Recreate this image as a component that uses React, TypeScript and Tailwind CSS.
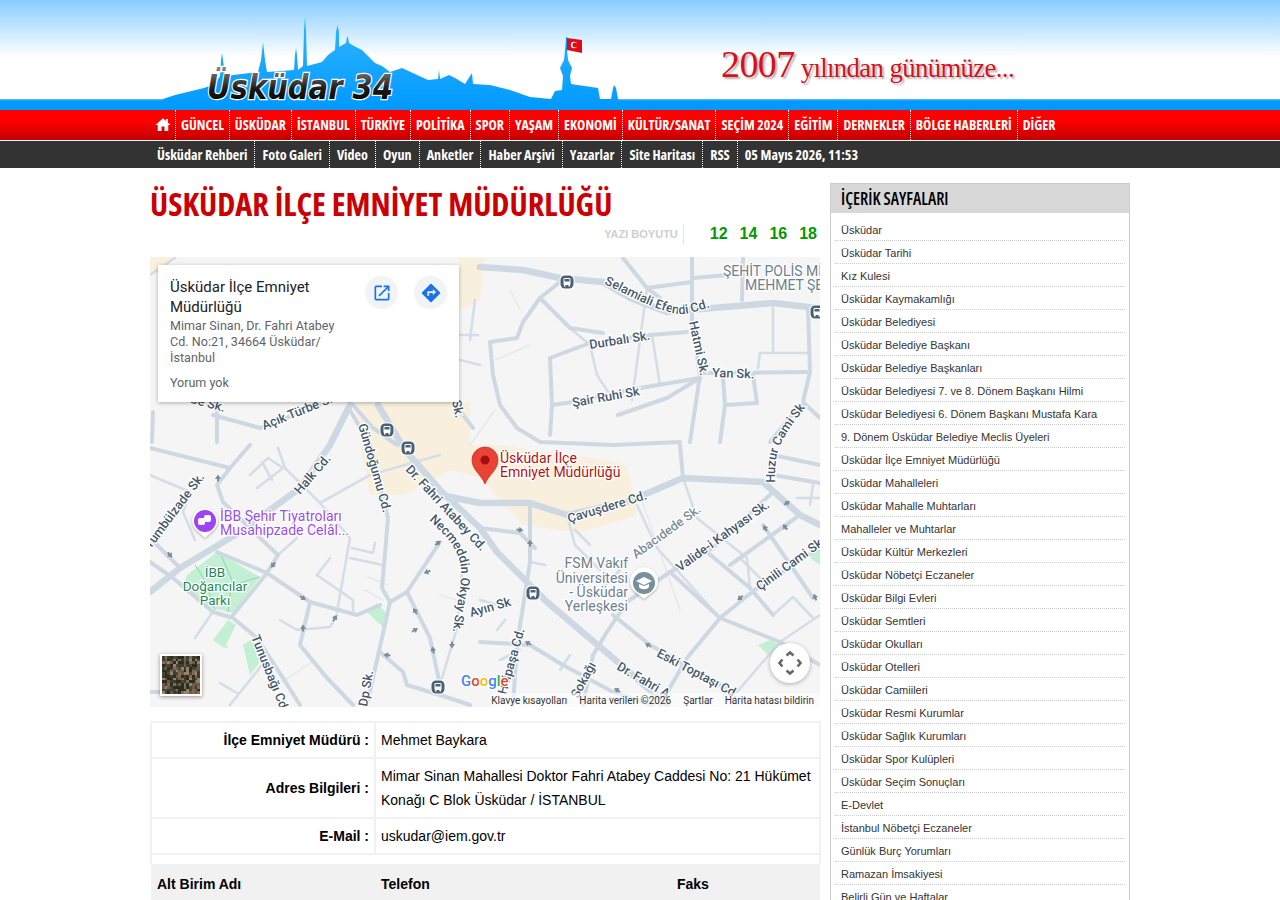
import React from 'react';

const MAIN_MENU = ['GÜNCEL', 'ÜSKÜDAR', 'İSTANBUL', 'TÜRKİYE', 'POLİTİKA', 'SPOR', 'YAŞAM', 'EKONOMİ', 'KÜLTÜR/SANAT', 'SEÇİM 2024', 'EĞİTİM', 'DERNEKLER', 'BÖLGE HABERLERİ', 'DİĞER'];
const SUB_MENU = ['Üsküdar Rehberi', 'Foto Galeri', 'Video', 'Oyun', 'Anketler', 'Haber Arşivi', 'Yazarlar', 'Site Haritası', 'RSS', '05 Mayıs 2026, 11:53'];
const PAGES = [
  'Üsküdar', 'Üsküdar Tarihi', 'Kız Kulesi', 'Üsküdar Kaymakamlığı', 'Üsküdar Belediyesi', 'Üsküdar Belediye Başkanı',
  'Üsküdar Belediye Başkanları', 'Üsküdar Belediyesi 7. ve 8. Dönem Başkanı Hilmi', 'Üsküdar Belediyesi 6. Dönem Başkanı Mustafa Kara',
  '9. Dönem Üsküdar Belediye Meclis Üyeleri', 'Üsküdar İlçe Emniyet Müdürlüğü', 'Üsküdar Mahalleleri', 'Üsküdar Mahalle Muhtarları',
  'Mahalleler ve Muhtarlar', 'Üsküdar Kültür Merkezleri', 'Üsküdar Nöbetçi Eczaneler', 'Üsküdar Bilgi Evleri', 'Üsküdar Semtleri',
  'Üsküdar Okulları', 'Üsküdar Otelleri', 'Üsküdar Camiileri', 'Üsküdar Resmi Kurumlar', 'Üsküdar Sağlık Kurumları', 'Üsküdar Spor Kulüpleri',
  'Üsküdar Seçim Sonuçları', 'E-Devlet', 'İstanbul Nöbetçi Eczaneler', 'Günlük Burç Yorumları', 'Ramazan İmsakiyesi', 'Belirli Gün ve Haftalar',
];

// map is drawn in page coordinates, viewBox starts at the map's corner
const ROADS_WIDE = [
  '480,267 523,270 560,278 603,282 630,298 667,312 713,308 773,303 817,308',
  '330,445 300,488 240,532 180,568 150,592',
  '350,405 330,445',
  '378,405 405,450 440,490 480,528 497,552 547,602 613,658 667,705',
  '440,495 480,503 530,503 567,515 627,502 683,478 763,482 800,515 820,525',
];
const ROADS_MID = [
  '560,282 540,298 523,322 517,338 490,342 493,375 500,405 517,428 540,442 613,445 680,442',
  '550,358 590,343 650,335 687,332', '540,298 570,328 603,333', '550,358 552,405 550,435',
  '552,405 573,402 640,388 700,378', '618,415 667,398 700,378', '692,258 692,322 700,375 690,442',
  '693,278 727,275', '743,258 742,300', '647,288 692,282', '623,258 647,288 660,298', '700,373 810,372',
  '808,308 810,372 803,402 820,418', '723,378 725,405 720,442', '725,405 757,403 753,375', '803,402 770,442',
  '150,562 173,578 213,612 233,618 257,638 283,678 300,705', '217,552 267,573 310,602 357,615 380,605',
  '267,573 278,555 257,535 223,502 217,485 230,468 250,445', '150,448 230,468', '267,573 233,615',
  '310,602 300,645 327,678 353,705', '350,410 370,445 388,518 382,588 390,602 367,705', '390,602 407,592 440,542',
  '407,592 430,638 440,685', '380,652 403,672 407,685 440,695 470,705', '153,412 152,442', '217,408 217,442', '213,415 260,428 320,405',
  '353,405 373,428 397,445', '150,538 180,568', '627,602 670,572 713,548 773,492', '670,572 720,618 780,642 820,665', '720,618 687,658 660,705',
  '720,618 757,588 820,548', '730,565 797,517', '683,478 680,445', '613,615 650,645 733,692', '530,505 530,562 517,645 513,705',
  '480,642 530,645 563,665 613,692 653,705', '593,655 583,705', '627,602 607,632 593,655', '707,552 750,588 773,615', '763,525 813,598', '773,492 800,515',
  '773,455 820,465', '773,475 820,483', '480,528 520,533 535,548', '150,692 165,692', '453,402 473,428',
];
const ROADS_THIN = [
  '773,308 773,352', '760,353 810,353', '760,353 758,368', '570,328 590,345 597,375 610,395', '647,288 640,340 632,400', '652,335 660,385',
  '433,518 463,558 457,628 442,678', '278,448 285,468 320,503 370,475 440,455', '320,503 350,538 337,612', '352,548 373,553 375,543', '350,558 383,565',
  '250,475 268,458 283,468 257,488', '262,462 272,480', '317,575 330,558', '317,575 353,600 353,612', '280,620 297,630 330,627 337,615',
  '195,638 212,613', '220,683 237,693', '230,705 262,665', '150,475 190,492 183,512 195,540', '278,555 297,538', '637,505 657,548 720,618',
  '683,478 697,518 747,558 750,588', '740,558 760,578', '773,615 793,597 813,618', '820,615 780,642', '737,692 780,642', '797,498 820,498', '813,485 810,505',
  '567,515 575,545 600,570', '460,335 478,335', '460,360 480,365', '475,300 470,340', '530,562 545,565', '480,600 505,607', '505,620 497,630',
  '500,660 520,650', '560,670 570,655', '150,275 175,258', '575,530 590,545', '600,590 620,570',
];
const ROADS_FAINT = ['470,445 495,410', '510,290 520,310', '530,345 495,360', '270,690 315,660', '368,577 388,585', '365,590 382,600', '440,595 462,602', '640,495 680,610'];

const PARKS = [
  '187,575 217,552 260,577 233,613 212,608 183,588', '213,640 228,620 236,625 226,645 228,648 222,647',
  '243,645 253,638 260,662 250,675', '367,612 377,603 388,615 383,627', '758,645 770,640 780,645 770,657', '810,558 820,548 820,565',
];
const BEIGE = [
  '355,402 470,402 470,445 500,445 530,450 593,458 627,465 637,515 580,533 523,525 480,478 450,470 405,495 370,495 365,470 357,420',
  '150,257 175,257 160,272 150,272', '458,258 485,258 480,300 460,310',
];
const ARROWS: [number, number, number][] = [
  [170, 555, 140], [218, 478, 0], [273, 565, 220], [303, 598, 120], [335, 618, 30], [303, 628, 0], [387, 655, 280], [415, 611, 330], [415, 630, 60],
  [433, 650, 345], [452, 645, 180], [427, 572, 250], [438, 543, 55], [520, 530, 100], [530, 543, 0], [648, 645, 300], [740, 598, 230], [765, 528, 330],
  [787, 503, 60], [785, 527, 320], [815, 597, 340], [528, 643, 300], [617, 690, 300],
];
const BUS_STOPS: [number, number][] = [[567, 282], [817, 312], [387, 430], [408, 448], [438, 687], [533, 593]];

type Label = { t: string; x: number; y: number; r: number; light?: boolean; anchor?: 'start' | 'end' };
const LABELS: Label[] = [
  { t: 'Hatmi Sk.', x: 689, y: 322, r: 78 },
  { t: 'Durbalı Sk.', x: 590, y: 349, r: -9 },
  { t: 'Şair Ruhi Sk', x: 573, y: 407, r: -10 },
  { t: 'Yan Sk.', x: 712, y: 377, r: 2 },
  { t: 'Açık Türbe Sk.', x: 264, y: 430, r: -22 },
  { t: 'Türbe Sk.', x: 172, y: 398, r: 15 },
  { t: 'Sk.', x: 452, y: 401, r: 78 },
  { t: 'Gündoğumu Cd.', x: 358, y: 425, r: 74 },
  { t: 'Halk Cd.', x: 300, y: 495, r: -49 },
  { t: 'Tumbülzade Sk.', x: 205, y: 477, r: -53, anchor: 'end' },
  { t: 'Dr. Fahri Atabey Cd.', x: 405, y: 470, r: 47 },
  { t: 'Ayın Sk', x: 471, y: 617, r: -16 },
  { t: 'Çavuşdere Cd.', x: 569, y: 523, r: -17 },
  { t: 'Abacıdede Sk.', x: 636, y: 559, r: -36, light: true },
  { t: 'Valide-i Kahyası Sk.', x: 680, y: 572, r: -36 },
  { t: 'Çinili Cami Sk', x: 760, y: 591, r: -36 },
  { t: 'Eski Toptaşı Cd.', x: 656, y: 656, r: 28 },
  { t: 'Dr. Fahri A', x: 616, y: 669, r: 30 },
  { t: 'Sokağı', x: 578, y: 699, r: -62 },
  { t: 'Hilipaşa Cd.', x: 506, y: 695, r: -74 },
  { t: 'Tunusbağı Cd.', x: 251, y: 637, r: 68 },
  { t: 'Dp Sk.', x: 367, y: 707, r: -80 },
];

const poly = (points: string[], width: number, color: string) =>
  points.map((p) => <polyline key={p} points={p} fill="none" stroke={color} strokeWidth={width} strokeLinejoin="round" strokeLinecap="round" />);

function BusStop({ x, y }: { x: number; y: number }) {
  return (
    <g transform={`translate(${x} ${y})`}>
      <rect x="-7.5" y="-7.5" width="15" height="15" rx="5" fill="#fff" />
      <rect x="-6.5" y="-6.5" width="13" height="13" rx="4.5" fill="#4a6076" />
      <rect x="-3.5" y="-4" width="7" height="7" rx="1" fill="#fff" />
      <rect x="-2.5" y="-3" width="5" height="2.5" fill="#4a6076" />
      <rect x="-3" y="3" width="1.5" height="1.5" fill="#fff" />
      <rect x="1.5" y="3" width="1.5" height="1.5" fill="#fff" />
    </g>
  );
}

function MapDrawing() {
  return (
    <svg viewBox="150 257 670 450" className="block w-[670px] h-[450px] font-['Roboto',sans-serif]">
      <rect x="150" y="257" width="670" height="450" fill="#f5f5f5" />
      {BEIGE.map((p) => <polygon key={p} points={p} fill="#f8f0dd" />)}
      {PARKS.map((p) => <polygon key={p} points={p} fill="#c3f0d5" />)}
      <g fill="none" stroke="#8fd3ae" strokeWidth="1">
        <polyline points="195,565 205,580 215,610" />
        <polyline points="220,553 232,580 228,612" />
        <polyline points="200,590 240,583 260,577" />
      </g>
      {poly(ROADS_FAINT, 1.5, '#e6e8ea')}
      {poly(ROADS_THIN, 2.6, '#d5dee6')}
      {poly(ROADS_MID, 4, '#cdd8e2')}
      {poly(ROADS_WIDE, 6.5, '#cdd8e2')}
      {ARROWS.map(([x, y, r]) => (
        <path key={`${x}-${y}`} d="M-3 1 0-3.5 3 1H1V3.5H-1V1Z" fill="#7c8b99" transform={`translate(${x} ${y}) rotate(${r})`} />
      ))}
      <g fontSize="12.7" fontWeight="500" stroke="#fff" strokeWidth="2.5" style={{ paintOrder: 'stroke' }}>
        {LABELS.map((l) => (
          <text key={l.t} x={l.x} y={l.y} fill={l.light ? '#7b8b9b' : '#44586c'} textAnchor={l.anchor ?? 'start'} transform={`rotate(${l.r} ${l.x} ${l.y})`}>{l.t}</text>
        ))}
        <path id="selamiali" d="M604 284 C625 293 640 303 665 311 S695 309 718 306" fill="none" stroke="none" />
        <path id="necmeddin" d="M429 520 C445 535 462 550 461 575 S455 610 453 632" fill="none" stroke="none" />
        <path id="huzur" d="M775 483 C775 455 775 445 806 407" fill="none" stroke="none" />
        <text fill="#44586c"><textPath href="#selamiali">Selamiali Efendi Cd.</textPath></text>
        <text fill="#44586c"><textPath href="#necmeddin">Necmeddin Okyay Sk.</textPath></text>
        <text fill="#44586c"><textPath href="#huzur">Huzur Cami Sk.</textPath></text>
      </g>
      <g fontSize="14" stroke="#fff" strokeWidth="2.5" style={{ paintOrder: 'stroke' }}>
        <g fill="#6d7f90">
          <text x="723" y="276">ŞEHİT POLİS Mİ</text>
          <text x="745" y="290">MEHMET ŞE</text>
          <text x="628" y="568" textAnchor="end">FSM Vakıf</text>
          <text x="628" y="583" textAnchor="end">Üniversitesi</text>
          <text x="628" y="597" textAnchor="end">- Üsküdar</text>
          <text x="628" y="611" textAnchor="end">Yerleşkesi</text>
        </g>
        <g fill="#9a4fe6">
          <text x="220" y="521">İBB Şehir Tiyatroları</text>
          <text x="220" y="535">Musahipzade Celâl...</text>
        </g>
        <g fill="#1b8a5a" textAnchor="middle" fontSize="13.5">
          <text x="215" y="577">İBB</text>
          <text x="215" y="591">Doğancılar</text>
          <text x="215" y="605">Parkı</text>
        </g>
        <g fill="#b31412">
          <text x="500" y="463">Üsküdar İlçe</text>
          <text x="500" y="477">Emniyet Müdürlüğü</text>
        </g>
      </g>
      {BUS_STOPS.map(([x, y]) => <BusStop key={`${x}-${y}`} x={x} y={y} />)}
      {/* poi pins */}
      <path d="M205 538 L195 529 A13 13 0 1 1 215 529 Z" fill="#fff" className="drop-shadow-[0_1px_1px_rgba(0,0,0,0.3)]" />
      <circle cx="205" cy="521" r="11" fill="#a142f4" />
      <rect x="198" y="518" width="7" height="7" rx="2" fill="#fff" />
      <rect x="204" y="515" width="7" height="7" rx="2" fill="#fff" />
      <path d="M644 599 L634 591 A14 14 0 1 1 654 591 Z" fill="#fff" className="drop-shadow-[0_1px_1px_rgba(0,0,0,0.3)]" />
      <circle cx="644" cy="583" r="11" fill="#78909c" />
      <path d="M644 577 652 581 644 585 636 581Z M639 584V587C641 590 647 590 649 587V584L644 586Z" fill="#fff" />
      <path d="M485 484 C481 474 472 470 472 460 A13 13 0 1 1 498 460 C498 470 489 474 485 484Z" fill="#ea4335" stroke="#c5221f" strokeWidth="0.7" />
      <circle cx="485" cy="460" r="4.5" fill="#a50e0e" />
      {/* google mark */}
      <text x="461" y="686" fontSize="15" fontWeight="500" stroke="#fff" strokeWidth="2.5" style={{ paintOrder: 'stroke' }}>
        <tspan fill="#4285f4">G</tspan><tspan fill="#ea4335">o</tspan><tspan fill="#fbbc04">o</tspan><tspan fill="#4285f4">g</tspan><tspan fill="#34a853">l</tspan><tspan fill="#ea4335">e</tspan>
      </text>
    </svg>
  );
}

function MapCard() {
  return (
    <div className="absolute left-[8px] top-[8px] w-[301px] h-[137px] bg-white shadow-[0_1px_4px_rgba(0,0,0,0.3)] pl-[12px] pr-[12px] pt-[12px] flex font-['Roboto',sans-serif]">
      <div className="w-[175px]">
        <div className="text-[15px] leading-[20px] text-[#202124]">Üsküdar İlçe Emniyet Müdürlüğü</div>
        <div className="mt-[1px] text-[12.5px] leading-[16px] tracking-[0.05px] text-[#5f6368]">Mimar Sinan, Dr. Fahri Atabey Cd. No:21, 34664 Üsküdar/ İstanbul</div>
        <div className="mt-[9px] text-[12.5px] leading-[16px] text-[#5f6368]">Yorum yok</div>
      </div>
      <div className="ml-[20px] -mt-px flex gap-[16px]">
        <div className="w-[33px] h-[33px] rounded-full bg-[#f1f3f4] flex items-center justify-center">
          <svg viewBox="0 0 24 24" className="w-[20px] h-[20px]" fill="#1a73e8"><path d="M19 19H5V5h7V3H5a2 2 0 0 0-2 2v14a2 2 0 0 0 2 2h14c1.1 0 2-.9 2-2v-7h-2v7zM14 3v2h3.59l-9.83 9.83 1.41 1.41L19 6.41V10h2V3h-7z" /></svg>
        </div>
        <div className="w-[33px] h-[33px] rounded-full bg-[#f1f3f4] flex items-center justify-center">
          <svg viewBox="0 0 24 24" className="w-[22px] h-[22px]" fill="#1a73e8"><path d="M21.71 11.29l-9-9a1 1 0 0 0-1.42 0l-9 9a1 1 0 0 0 0 1.42l9 9a1 1 0 0 0 1.42 0l9-9a1 1 0 0 0 0-1.42zM14 14.5V12h-4v3H8v-4a1 1 0 0 1 1-1h5V7.5l3.5 3.5-3.5 3.5z" /></svg>
        </div>
      </div>
    </div>
  );
}

function SatelliteThumb() {
  const cells = Array.from({ length: 196 }, (_, i) => i);
  const tones = ['#3a3f2c', '#6b5a48', '#26301f', '#85684f', '#46483a', '#9a8068', '#2c2a22'];
  return (
    <div className="absolute left-[10px] bottom-[11px] w-[42px] h-[42px] border-2 border-white shadow-[0_1px_4px_rgba(0,0,0,0.4)] overflow-hidden">
      <svg viewBox="0 0 14 14" className="block w-full h-full blur-[0.6px]" shapeRendering="crispEdges">
        {cells.map((i) => <rect key={i} x={i % 14} y={Math.floor(i / 14)} width="1" height="1" fill={tones[((i * 7919) ^ (i * i * 31)) % tones.length]} />)}
      </svg>
    </div>
  );
}

function GoogleMap() {
  return (
    <div className="relative w-[670px] h-[450px] overflow-hidden">
      <MapDrawing />
      <MapCard />
      <SatelliteThumb />
      <div className="absolute right-[10px] top-[386px] w-[40px] h-[40px] rounded-full bg-white shadow-[0_1px_4px_rgba(0,0,0,0.3)] flex items-center justify-center">
        <svg viewBox="0 0 24 24" className="w-[28px] h-[28px]" fill="none" stroke="#666" strokeWidth="2.2">
          <path d="M9 5.5 12 3l3 2.5M9 18.5l3 2.5 3-2.5M5.5 9 3 12l2.5 3M18.5 9 21 12l-2.5 3" />
        </svg>
      </div>
      <div className="absolute right-0 bottom-0 h-[14px] flex items-center pr-[6px] text-[10px] text-[#333] bg-white/60 font-['Roboto',sans-serif] whitespace-nowrap">
        <span>Klavye kısayolları</span>
        <span className="ml-[12px]">Harita verileri ©2026</span>
        <span className="ml-[12px]">Şartlar</span>
        <span className="ml-[12px]">Harita hatası bildirin</span>
      </div>
    </div>
  );
}

function Skyline() {
  return (
    <svg viewBox="0 0 480 110" className="block w-[480px] h-[110px] shrink-0">
      <defs>
        <linearGradient id="sky" x1="0" y1="0" x2="0" y2="1">
          <stop offset="0" stopColor="#33b6ff" />
          <stop offset="1" stopColor="#0099ff" />
        </linearGradient>
        <linearGradient id="logo" x1="0" y1="0" x2="0" y2="1">
          <stop offset="0" stopColor="#8a8a8a" />
          <stop offset="0.55" stopColor="#1a1a1a" />
          <stop offset="1" stopColor="#000" />
        </linearGradient>
      </defs>
      <path
        fill="url(#sky)"
        d="M13 99 25 95 54 88 65 84 70 76 71 60 72 53 73 60 75 76 108 72 111 60 113 42 115 60 117 72 144 70 145 55 146 48 147 55 148 70 153 66 154 30 155 17 156 30 157 66 172 62 178 55 185 50 186 32 187.500 25 189 32 189 47 196 43 197 37 198 37 199 43 204 46 212 50 218 56 225 63 232 66 240 72 252 68 265 74 278 80 288 79 289 70 290 79 299 75 305 78 315 84 322 73 323 84 340 85 360 90 380 97 401 99 405 91 412 90 413 76 410 68 414 60 415 50 416 40 417 50 418 60 422 68 420 76 421 84 448 88 450 99 461 99 463 88 464 85 466 88 468 99 480 110 13 110Z"
      />
      <rect x="416" y="37" width="1" height="15" fill="#0099ff" />
      <path d="M417 38 432 40 432 53 417 50Z" fill="#e30a17" />
      <circle cx="424" cy="45" r="3.200" fill="#fff" />
      <circle cx="425" cy="45" r="2.500" fill="#e30a17" />
      <text x="57" y="99" fontFamily="'DejaVu Sans',sans-serif" fontStyle="italic" fontWeight="bold" fontSize="33" fill="url(#logo)" stroke="#fff" strokeWidth="2.500" textLength="186" lengthAdjust="spacingAndGlyphs" style={{ paintOrder: 'stroke' }}>
        Üsküdar 34
      </text>
    </svg>
  );
}

export default function App() {
  return (
    <div className="min-h-screen bg-white font-['Liberation_Sans',Arial,sans-serif]">
      <header className="h-[110px] bg-[linear-gradient(#87cdfe_0,#fff_57px,#fff_99px,#66c2ff_99px,#0099ff_101px)]">
        <div className="w-[980px] mx-auto h-full flex">
          <Skyline />
          <div className="ml-[91px] pt-[40px] text-[#d8101c] font-['Liberation_Serif',serif] text-[26.7px] leading-[48px] tracking-[-0.6px] whitespace-nowrap [text-shadow:2px_2px_2px_rgba(0,0,0,0.3)]">
            <span className="text-[38px]">2007</span> yılından günümüze...
          </div>
        </div>
      </header>

      <nav className="h-[30px] bg-[linear-gradient(#ff0000_0,#ff0000_35%,#c40000_100%)] border-b-0">
        <ul className="w-[980px] mx-auto h-full flex font-['Open_Sans',sans-serif] [font-stretch:75%] text-[13.95px] font-bold text-white">
          <li className="w-[25px] flex items-center justify-center">
            <svg viewBox="0 0 24 24" className="w-[18px] h-[18px]" fill="#fff"><path d="M10 20v-6h4v6h5v-8h3L12 3 2 12h3v8z" /><rect x="16" y="4" width="2.500" height="5" /></svg>
          </li>
          {MAIN_MENU.map((m) => (
            <li key={m} className="flex items-center px-[5px] border-l border-dotted border-white whitespace-nowrap">{m}</li>
          ))}
        </ul>
      </nav>
      <nav className="mt-px h-[27px] bg-[#333]">
        <ul className="w-[980px] mx-auto h-full flex font-['Open_Sans',sans-serif] [font-stretch:75%] text-[14.1px] font-bold text-white">
          {SUB_MENU.map((m, i) => (
            <li key={m} className={`flex items-center px-[7px] whitespace-nowrap ${i > 0 ? 'border-l border-dotted border-white' : ''}`}>{m}</li>
          ))}
        </ul>
      </nav>

      <main className="w-[980px] mx-auto mt-[15px] flex justify-between items-start">
        <div className="w-[670px]">
          <h1 className="font-['Open_Sans',sans-serif] [font-stretch:75%] font-bold text-[32.4px] leading-[40px] text-[#cc0000] whitespace-nowrap">ÜSKÜDAR İLÇE EMNİYET MÜDÜRLÜĞÜ</h1>
          <div className="h-[34px] flex items-center justify-end pb-[12px]">
            <span className="text-[11px] font-bold text-[#cfcfcf] pr-[5px] mr-[26px] border-r border-[#e5e5e5] leading-[20px]">YAZI BOYUTU</span>
            <div className="flex gap-[12px] pr-[3px] text-[16px] font-bold text-[#009900]">
              <span>12</span><span>14</span><span>16</span><span>18</span>
            </div>
          </div>
          <GoogleMap />
          <table className="mt-[14px] w-[669px] table-fixed border-collapse text-[14px] leading-[24px] text-black">
            <colgroup>
              <col className="w-[224px]" />
              <col className="w-[296px]" />
              <col className="w-[149px]" />
            </colgroup>
            <tbody>
              <tr>
                <td className="border-2 border-[#f1f1f1] pl-[6px] pr-[5px] py-[5px] text-right font-bold">İlçe Emniyet Müdürü :</td>
                <td colSpan={2} className="border-2 border-[#f1f1f1] pl-[5px] pr-[4px] py-[5px]">Mehmet Baykara</td>
              </tr>
              <tr>
                <td className="border-2 border-[#f1f1f1] pl-[6px] pr-[5px] py-[5px] text-right font-bold">Adres Bilgileri :</td>
                <td colSpan={2} className="border-2 border-[#f1f1f1] pl-[5px] pr-[4px] py-[5px]">Mimar Sinan Mahallesi Doktor Fahri Atabey Caddesi No: 21 Hükümet Konağı C Blok Üsküdar / İSTANBUL</td>
              </tr>
              <tr>
                <td className="border-2 border-[#f1f1f1] pl-[6px] pr-[5px] py-[5px] text-right font-bold">E-Mail :</td>
                <td colSpan={2} className="border-2 border-[#f1f1f1] pl-[5px] pr-[4px] py-[5px]">uskudar@iem.gov.tr</td>
              </tr>
              <tr>
                <td colSpan={3} className="h-[10px] p-0 border-x-2 border-[#f1f1f1]"></td>
              </tr>
              <tr className="bg-[#f1f1f1] font-bold">
                <td className="px-[6px] py-[8px]">Alt Birim Adı</td>
                <td className="px-[6px] py-[8px]">Telefon</td>
                <td className="px-[6px] py-[8px]">Faks</td>
              </tr>
            </tbody>
          </table>
        </div>

        <aside className="w-[300px] border border-[#cccccc] border-b-0">
          <h2 className="h-[29px] bg-[#d8d8d8] pl-[10px] flex items-center font-['Open_Sans',sans-serif] [font-stretch:75%] font-semibold text-[17px] text-black">İÇERİK SAYFALARI</h2>
          <ul className="px-[4px] pt-[5px] text-[11px] text-[#333]">
            {PAGES.map((p) => (
              <li key={p} className="h-[23px] pl-[6px] pt-[2px] flex items-center border-b border-dotted border-[#cccccc] whitespace-nowrap">{p}</li>
            ))}
          </ul>
        </aside>
      </main>
    </div>
  );
}
